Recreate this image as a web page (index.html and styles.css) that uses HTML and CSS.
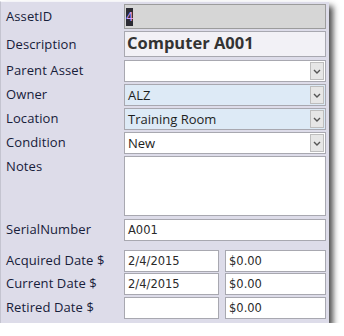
FILE: index.html
```html
<!DOCTYPE html>
<html lang="en">
<head>
    <meta charset="UTF-8">
    <title>Asset Details</title>
    <link rel="stylesheet" href="styles.css">
</head>
<body>
    <div class="panel">
        <div class="row r-id">
            <label class="lbl">AssetID</label>
            <div class="field locked"><span class="sel">4</span></div>
        </div>
        <div class="row r-desc">
            <label class="lbl">Description</label>
            <div class="field desc">Computer A001</div>
        </div>
        <div class="row r-combo">
            <label class="lbl">Parent Asset</label>
            <div class="field combo"><span class="val"></span><span class="drop"><svg width="8" height="5" viewBox="0 0 8 5"><path d="M1 1 L4 4 L7 1" fill="none" stroke="#555" stroke-width="1.4"/></svg></span></div>
        </div>
        <div class="row r-combo">
            <label class="lbl">Owner</label>
            <div class="field combo blue"><span class="val">ALZ</span><span class="drop"><svg width="8" height="5" viewBox="0 0 8 5"><path d="M1 1 L4 4 L7 1" fill="none" stroke="#555" stroke-width="1.4"/></svg></span></div>
        </div>
        <div class="row r-combo">
            <label class="lbl">Location</label>
            <div class="field combo blue"><span class="val">Training Room</span><span class="drop"><svg width="8" height="5" viewBox="0 0 8 5"><path d="M1 1 L4 4 L7 1" fill="none" stroke="#555" stroke-width="1.4"/></svg></span></div>
        </div>
        <div class="row r-combo">
            <label class="lbl">Condition</label>
            <div class="field combo"><span class="val">New</span><span class="drop"><svg width="8" height="5" viewBox="0 0 8 5"><path d="M1 1 L4 4 L7 1" fill="none" stroke="#555" stroke-width="1.4"/></svg></span></div>
        </div>
        <div class="row r-notes">
            <label class="lbl">Notes</label>
            <div class="field notes"></div>
        </div>
        <div class="row r-serial">
            <label class="lbl">SerialNumber</label>
            <div class="field plain">A001</div>
        </div>
        <div class="row r-date first">
            <label class="lbl">Acquired Date $</label>
            <div class="pair">
                <div class="field plain date">2/4/2015</div>
                <div class="field plain money">$0.00</div>
            </div>
        </div>
        <div class="row r-date">
            <label class="lbl">Current Date $</label>
            <div class="pair">
                <div class="field plain date">2/4/2015</div>
                <div class="field plain money">$0.00</div>
            </div>
        </div>
        <div class="row r-date">
            <label class="lbl">Retired Date $</label>
            <div class="pair">
                <div class="field plain date"></div>
                <div class="field plain money">$0.00</div>
            </div>
        </div>
    </div>
</body>
</html>
```

FILE: styles.css
```css
body {
    margin: 0;
    background: #ffffff;
    font-family: "Open Sans", "Noto Sans", sans-serif;
}
.panel {
    width: 329px;
    height: 322px;
    margin: 1px 0 0 0;
    box-sizing: border-box;
    padding: 2px 0 0 5px;
    background: #dddce9;
    border-left: 1px solid #c4c4d0;
    border-top: 1px solid #f4f4f8;
    box-shadow: 4px 5px 6px rgba(30, 30, 30, 0.8);
}
.row {
    display: grid;
    grid-template-columns: 118px 202px;
    margin-bottom: 2px;
}
.lbl {
    font-size: 13px;
    color: #17203a;
    padding-top: 2px;
    line-height: 17px;
    white-space: nowrap;
    letter-spacing: 0.1px;
}
.field {
    box-sizing: border-box;
    border: 1px solid #a8a8b0;
    background: #ffffff;
    font-size: 13px;
    color: #1e1e1e;
    padding-left: 3px;
}
.r-id { height: 25px; }
.r-id .lbl { padding-top: 4px; }
.locked {
    background: #d6d6d6;
    border-color: #9c9c9c;
    padding: 2px 0 0 1px;
}
.sel {
    display: inline-block;
    background: #2b2b33;
    color: #d9a0ff;
    font-family: "DejaVu Sans", sans-serif;
    font-size: 12px;
    width: 7px;
    height: 18px;
    line-height: 18px;
    text-align: center;
}
.r-desc { height: 26px; margin-bottom: 3px; }
.r-desc .lbl { padding-top: 5px; }
.desc {
    background: #f2f1f6;
    font-size: 16.5px;
    font-weight: bold;
    color: #333333;
    line-height: 22px;
    padding-left: 2px;
}
.r-combo { height: 22px; }
.combo {
    display: flex;
    align-items: center;
    padding: 0 1px 0 3px;
}
.combo .val { flex: 1; line-height: 20px; }
.blue { background: #ddeaf6; }
.drop {
    width: 14px;
    height: 18px;
    box-sizing: border-box;
    border: 1px solid #bdbdbd;
    background: #e6e6e6;
    display: flex;
    align-items: center;
    justify-content: center;
}
.r-notes { height: 60px; margin-bottom: 3px; }
.r-serial { height: 22px; margin-bottom: 9px; }
.plain {
    font-family: "DejaVu Sans", sans-serif;
    font-size: 11.5px;
    line-height: 20px;
    color: #2a2a2a;
}
.r-date { height: 22px; }
.r-date.first { height: 21px; margin-bottom: 2px; }
.pair {
    display: grid;
    grid-template-columns: 95px 101px;
    column-gap: 6px;
}
```
